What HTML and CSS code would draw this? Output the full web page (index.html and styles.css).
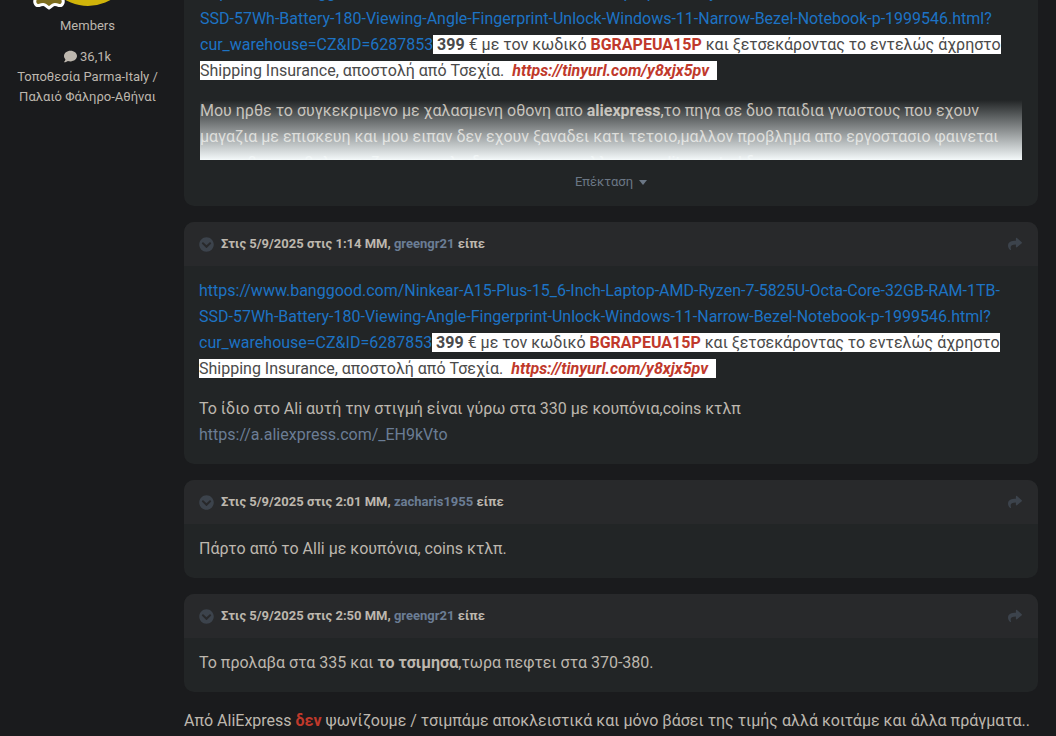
FILE: index.html
```html
<!DOCTYPE html>
<html lang="el">
<head>
<meta charset="UTF-8">
<meta name="viewport" content="width=device-width, initial-scale=1.0">
<title>Προσφορές - Συζήτηση</title>
<link rel="stylesheet" href="styles.css">
</head>
<body>
<svg class="sprite" aria-hidden="true">
    <symbol id="icon-toggle" viewBox="0 0 512 512">
        <path d="M504 256c0 137-111 248-248 248S8 393 8 256 119 8 256 8s248 111 248 248zM273 369.900l135.500-135.500c9.400-9.400 9.400-24.600 0-33.900l-17-17c-9.400-9.400-24.600-9.400-33.900 0L256 285.100 154.400 183.500c-9.400-9.400-24.600-9.400-33.900 0l-17 17c-9.400 9.400-9.400 24.600 0 33.900L239 369.900c9.400 9.400 24.600 9.400 34 0z"/>
    </symbol>
    <symbol id="icon-share" viewBox="0 0 512 512">
        <path d="M503.700 189.800L327.700 37.900C312.300 24.500 288 35.300 288 56v80.100C127.400 137.900 0 170.100 0 322.300c0 61.400 39.600 122.300 83.300 154.100 13.700 9.900 33.100-2.500 28.100-18.600C66.100 312.800 132.900 274.300 288 272.100V360c0 20.700 24.300 31.500 39.700 18.200l176-152c11.100-9.600 11.100-26.800 0-36.400z"/>
    </symbol>
</svg>
<article class="post">
    <aside class="author">
        <div class="avatar">
            <svg class="avatar-photo" viewBox="0 0 90 90" aria-hidden="true">
                <circle cx="45" cy="45" r="45"/>
            </svg>
            <svg class="avatar-badge" viewBox="0 0 32 32" aria-hidden="true">
                <path d="M4 2L4 19Q1 22 2 25Q3 28 6 27.500Q10 26 12 27L16 30L20 27Q22 26 26 27.500Q29 28 30 25Q31 22 28 19L28 2Z"/>
            </svg>
        </div>
        <ul class="author-info">
            <li class="group">Members</li>
            <li>
                <svg class="icon-comment" viewBox="0 0 512 512" aria-hidden="true"><path d="M256 32C114.600 32 0 125.100 0 240c0 49.600 21.400 95 57 130.700C44.500 421.100 2.700 466 2.200 466.500c-2.200 2.300-2.800 5.700-1.500 8.700S4.800 480 8 480c66.300 0 116-31.800 140.600-51.400 32.700 12.300 69 19.400 107.400 19.400 141.400 0 256-93.100 256-208S397.400 32 256 32z"/></svg>
                36,1k
            </li>
            <li>Τοποθεσία Parma-Italy / Παλαιό Φάληρο-Αθήναι</li>
        </ul>
    </aside>
    <div class="content">
        <blockquote class="quote">
            <div class="quote-body truncated">
                <p><a class="deal" href="#">https://www.banggood.com/Ninkear-A15-Plus-15_6-Inch-Laptop-AMD-Ryzen-7-5825U-Octa-Core-32GB-RAM-1TB-SSD-57Wh-Battery-180-Viewing-Angle-Fingerprint-Unlock-Windows-11-Narrow-Bezel-Notebook-p-1999546.html?cur_warehouse=CZ&amp;ID=6287853</a><span class="mark"> <strong>399</strong> € με τον κωδικό <strong class="red">BGRAPEUA15P</strong> και ξετσεκάροντας το εντελώς άχρηστο Shipping Insurance, αποστολή από Τσεχία.&nbsp; <a class="red tiny" href="#">https://tinyurl.com/y8xjx5pv</a>&nbsp;&nbsp;</span></p>
                <p>Μου ηρθε το συγκεκριμενο με χαλασμενη οθονη απο <strong>aliexpress</strong>,το πηγα σε δυο παιδια γνωστους που εχουν μαγαζια με επισκευη και μου ειπαν δεν εχουν ξαναδει κατι τετοιο,μαλλον προβλημα απο εργοστασιο φαινεται στην οθονη καθολου μαζι με το καλωδιο και πρεπει αλλαγη, quality control δεν υπαρχει σε αυτα</p>
            </div>
            <button class="expand" type="button">Επέκταση <span class="caret"></span></button>
        </blockquote>

        <blockquote class="quote">
            <header class="quote-head">
                <button class="icon-button" type="button" aria-label="Σύμπτυξη"><svg class="icon-toggle"><use href="#icon-toggle"/></svg></button>
                <span class="cite">Στις 5/9/2025 στις 1:14 ΜΜ, <a href="#">greengr21</a> είπε</span>
                <a class="share" href="#" aria-label="Μετάβαση στην ανάρτηση"><svg class="icon-share"><use href="#icon-share"/></svg></a>
            </header>
            <div class="quote-body">
                <p><a class="deal" href="#">https://www.banggood.com/Ninkear-A15-Plus-15_6-Inch-Laptop-AMD-Ryzen-7-5825U-Octa-Core-32GB-RAM-1TB-SSD-57Wh-Battery-180-Viewing-Angle-Fingerprint-Unlock-Windows-11-Narrow-Bezel-Notebook-p-1999546.html?cur_warehouse=CZ&amp;ID=6287853</a><span class="mark"> <strong>399</strong> € με τον κωδικό <strong class="red">BGRAPEUA15P</strong> και ξετσεκάροντας το εντελώς άχρηστο Shipping Insurance, αποστολή από Τσεχία.&nbsp; <a class="red tiny" href="#">https://tinyurl.com/y8xjx5pv</a>&nbsp;&nbsp;</span></p>
                <p>Το ίδιο στο Ali αυτή την στιγμή είναι γύρω στα 330 με κουπόνια,coins κτλπ<br><a href="#">https://a.aliexpress.com/_EH9kVto</a></p>
            </div>
        </blockquote>

        <blockquote class="quote">
            <header class="quote-head">
                <button class="icon-button" type="button" aria-label="Σύμπτυξη"><svg class="icon-toggle"><use href="#icon-toggle"/></svg></button>
                <span class="cite">Στις 5/9/2025 στις 2:01 ΜΜ, <a href="#">zacharis1955</a> είπε</span>
                <a class="share" href="#" aria-label="Μετάβαση στην ανάρτηση"><svg class="icon-share"><use href="#icon-share"/></svg></a>
            </header>
            <div class="quote-body">
                <p>Πάρτο από το Alli με κουπόνια, coins κτλπ.</p>
            </div>
        </blockquote>

        <blockquote class="quote">
            <header class="quote-head">
                <button class="icon-button" type="button" aria-label="Σύμπτυξη"><svg class="icon-toggle"><use href="#icon-toggle"/></svg></button>
                <span class="cite">Στις 5/9/2025 στις 2:50 ΜΜ, <a href="#">greengr21</a> είπε</span>
                <a class="share" href="#" aria-label="Μετάβαση στην ανάρτηση"><svg class="icon-share"><use href="#icon-share"/></svg></a>
            </header>
            <div class="quote-body">
                <p>Το προλαβα στα 335 και <strong>το τσιμησα</strong>,τωρα πεφτει στα 370-380.</p>
            </div>
        </blockquote>

        <p class="reply">Από AliExpress <strong class="red">δεν</strong> ψωνίζουμε / τσιμπάμε αποκλειστικά και μόνο βάσει της τιμής αλλά κοιτάμε και άλλα πράγματα..</p>
    </div>
</article>
</body>
</html>
```

FILE: styles.css
```css
* {
    box-sizing: border-box;
}

body {
    margin: 0;
    height: 100vh;
    overflow: hidden;
    background-color: #1a1b1d;
    color: #bdb7ae;
    font-family: Roboto, sans-serif;
    font-size: 16px;
    line-height: 26px;
}

p {
    margin: 0;
}

a {
    color: #6b7d95;
    text-decoration: none;
}

strong {
    font-weight: 700;
}

button {
    padding: 0;
    border: 0;
    background: none;
    font: inherit;
    cursor: pointer;
}

.sprite {
    display: none;
}

.post {
    display: flex;
    padding-right: 18px;
}

/* author column */
.author {
    flex: 0 0 184px;
    padding: 0 9px 0 0;
    font-size: 13px;
    line-height: 20px;
    text-align: center;
}

.avatar {
    position: relative;
    width: 90px;
    height: 90px;
    margin: -84px auto 0;
}

.avatar-photo {
    display: block;
    width: 90px;
    height: 90px;
    fill: #d0b40a;
}

.avatar-badge {
    position: absolute;
    left: -10px;
    bottom: -4px;
    width: 32px;
    height: 32px;
    fill: #7d6d1f;
    stroke: #fff;
    stroke-width: 3px;
    stroke-linejoin: round;
}

.author-info {
    margin: 0;
    padding: 10px 14px 0;
    list-style: none;
}

.group {
    margin-bottom: 11px;
}

.icon-comment {
    width: 13px;
    height: 13px;
    fill: #bdb7ae;
    vertical-align: -2px;
}

/* quotes */
.content {
    flex: 1;
    min-width: 0;
    margin-top: -20px;
}

.quote {
    margin: 0 0 16px;
    border-radius: 10px;
    background-color: #222526;
    overflow: hidden;
}

.quote-head {
    display: flex;
    align-items: center;
    gap: 7px;
    height: 44px;
    padding: 0 16px 0 15px;
    background-color: #28292b;
    font-size: 13px;
    font-weight: 700;
    line-height: 20px;
}

.cite {
    flex: 1;
}

.icon-button,
.share {
    display: flex;
}

.icon-toggle {
    width: 15px;
    height: 15px;
    fill: #3c434c;
}

.icon-share {
    width: 14px;
    height: 14px;
    fill: #3c434c;
}

.quote-body {
    padding: 12px 16px 16px 15px;
    overflow-wrap: break-word;
}

.quote-body p + p {
    margin-top: 14px;
}

.truncated {
    position: relative;
    height: 180px;
    padding: 0;
    margin: 0 16px;
    overflow: hidden;
}

.truncated::after {
    content: "";
    position: absolute;
    left: 0;
    right: 0;
    bottom: 0;
    height: 60px;
    background: linear-gradient(to bottom, transparent, #f4f9fa);
}

.deal {
    color: #1d73c4;
}

.mark {
    background-color: #fff;
    color: #4a4a4a;
}

.red {
    color: #c0392b;
}

.tiny {
    font-weight: 700;
    font-style: italic;
}

.expand {
    display: flex;
    justify-content: center;
    align-items: center;
    gap: 6px;
    width: 100%;
    padding: 12px 0 14px;
    color: #6b7785;
    font-size: 13px;
    line-height: 20px;
}

.caret {
    border: 4px solid transparent;
    border-top: 5px solid #6b7785;
    border-bottom: 0;
}
```
